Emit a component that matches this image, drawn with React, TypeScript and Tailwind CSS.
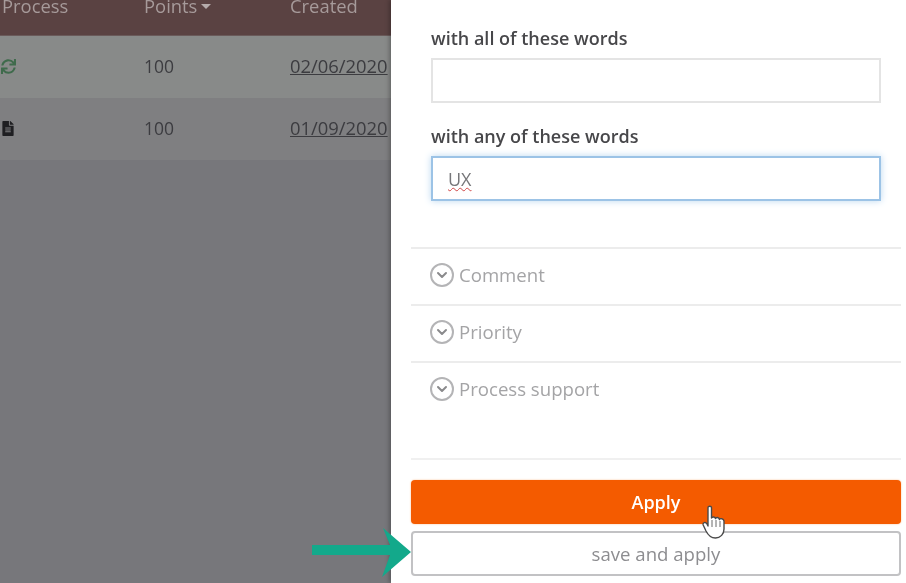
import { ChevronDown } from 'lucide-react';
import { FaFileAlt, FaSync } from 'react-icons/fa';

const sections = ['Comment', 'Priority', 'Process support'];

const rows = [
  { id: 1, icon: <FaSync className="w-[15px] h-[15px] text-[#3f6b4c]" />, points: 100, created: '02/06/2020', bg: 'bg-[#888a89]' },
  { id: 2, icon: <FaFileAlt className="w-[14px] h-[15px] text-[#1f1f22]" />, points: 100, created: '01/09/2020', bg: 'bg-[#7f7f81]' },
];

function LeftTable() {
  return (
    <div className="w-[391px] shrink-0 h-full flex flex-col bg-[#77777b] overflow-hidden">
      <div className="h-9 shrink-0 bg-[#5a4242] border-b border-[#6a5a5a] overflow-hidden text-[#a69a9a] text-[18.4px]">
        <div className="flex h-[12px] leading-[12px] items-center pl-[2px]">
          <span className="w-[142px]">Process</span>
          <span className="w-[146px] flex items-center gap-1">
            Points
            <span className="w-0 h-0 border-x-[5px] border-x-transparent border-t-[5px] border-t-[#b5abab]" />
          </span>
          <span>Created</span>
        </div>
      </div>
      {rows.map((row) => (
        <div key={row.id} className={`h-[62px] shrink-0 flex items-center pb-[2px] text-[17.5px] text-[#3c3c40] ${row.bg}`}>
          <span className="w-[144px] pl-[1px]">{row.icon}</span>
          <span className="w-[146px]">{row.points}</span>
          <span className="underline whitespace-nowrap text-[18.4px]">{row.created}</span>
        </div>
      ))}
    </div>
  );
}

function Field({ label, value, focused }: { label: string; value?: string; focused?: boolean }) {
  return (
    <div>
      <div className="h-[24px] leading-[24px] text-[18px] font-semibold text-[#47474a] whitespace-nowrap">{label}</div>
      <div
        className={`mt-[8px] h-[45px] flex items-center pl-[15px] pt-[2px] border-2 bg-white ${
          focused ? 'border-[#9cc3e6] shadow-[0_0_7px_#bcd8f0]' : 'border-[#e4e4e4]'
        }`}
      >
        {value && <span className="text-[18px] text-[#77777a] underline decoration-wavy decoration-[#d04848] decoration-1">{value}</span>}
      </div>
    </div>
  );
}

export default function App() {
  return (
    <div className="relative flex h-[583px] w-[906px] overflow-hidden bg-white font-['Open_Sans',sans-serif] blur-[0.6px]">
      <LeftTable />

      <div className="flex-1 flex flex-col pl-[20px] pr-[5px] shadow-[-2px_0_4px_rgba(0,0,0,0.25)] bg-white">
        <div className="pl-[20px] pr-[20px] pt-[26px] flex flex-col gap-[21px]">
          <Field label="with all of these words" />
          <Field label="with any of these words" value="UX" focused />
        </div>

        <div className="mt-[46px]">
          {sections.map((name) => (
            <div key={name} className="h-[57px] border-t-2 border-[#ececec] flex items-center gap-[5px] pl-[19px] pb-[3px] text-[18.6px] text-[#a4a4a6]">
              <span className="w-6 h-6 rounded-full border-2 border-[#b4b4b6] flex items-center justify-center">
                <ChevronDown className="w-4 h-4 text-[#8a8a8c]" strokeWidth={3} />
              </span>
              {name}
            </div>
          ))}
        </div>

        <div className="mt-[40px] border-t-2 border-[#f0f0f0] pt-[20px] flex flex-col gap-[7px]">
          <button className="h-[44px] rounded-[4px] bg-[#f45b00] text-white text-[18px] font-semibold shadow-[0_0_2px_#f9b98a]">Apply</button>
          <button className="h-[45px] rounded-[4px] bg-white border-2 border-[#c2c2c4] text-[18.6px] text-[#8d8d90]">save and apply</button>
        </div>
      </div>

      <svg className="absolute left-[702px] top-[505px]" width="24" height="34" viewBox="0 0 24 34" fill="none">
        <path
          d="M6 2.5C6 .8 9.5 .8 9.5 2.5V13C10 11.5 13 11.5 13.5 13.5C14 12 17 12 17.5 14.5C18 13 21.5 13.5 22 16V24C22 29 18.5 33 13.5 33C8.5 33 6 30 4 26L1.2 20C.5 17.5 3.5 16.5 5 19L6 21Z"
          fill="white"
          stroke="#4a4a4a"
          strokeWidth="1.4"
          strokeLinejoin="round"
        />
        <path d="M10 15V22M14 15V22M18 16V22" stroke="#6a6a6a" strokeWidth="1" />
      </svg>

      <svg className="absolute left-[312px] top-[526px]" width="100" height="52" viewBox="0 0 100 52">
        <path d="M0 19H78L71 2L99 26L70 51L78 29H0Z" fill="#13a98b" />
      </svg>
    </div>
  );
}
